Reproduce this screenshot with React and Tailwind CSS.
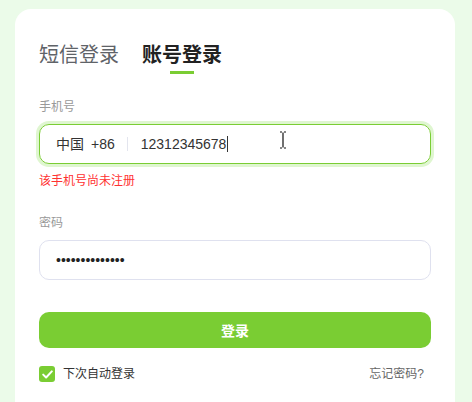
import { useState } from "react";

export default function App() {
  const [tab, setTab] = useState("account");
  const [remember, setRemember] = useState(true);

  return (
    <div className="min-h-screen w-full bg-[#ebfbe9] pt-[9px] pl-[15px] font-['Liberation_Sans','Noto_Sans_CJK_SC',sans-serif]">
      <div className="w-[440px] bg-white rounded-t-[16px] px-[24px] pt-[31px] pb-[20px]">
        {/* Tabs */}
        <div className="flex items-start gap-[23px]">
          <button
            onClick={() => setTab("sms")}
            className="flex flex-col items-center"
          >
            <span className="text-[20px] leading-[28px] text-[#5f6368] font-['Noto_Sans_CJK_SC',sans-serif]">
              短信登录
            </span>
          </button>
          <button
            onClick={() => setTab("account")}
            className="flex flex-col items-center"
          >
            <span className="text-[20px] leading-[28px] font-bold text-[#222] font-['Noto_Sans_CJK_SC',sans-serif]">
              账号登录
            </span>
            <span className="mt-[3px] w-[24px] h-[3px] bg-[#7acd33]" />
          </button>
        </div>

        {/* Phone */}
        <div className="mt-[25px] text-[12px] leading-[16px] text-[#999]">手机号</div>
        <div className="relative mt-[9px] h-[40px] rounded-[10px] border border-[#7acd33] shadow-[0_0_0_3px_#dff6d0] flex items-center pl-[16px]">
          <span className="text-[14px] text-[#333]">中国</span>
          <span className="ml-[7px] text-[14px] text-[#333]">+86</span>
          <span className="ml-[12px] w-px h-[14px] bg-[#e3e5ee]" />
          <span className="ml-[13px] text-[14px] text-[#333]">12312345678</span>
          <span className="ml-[1px] w-px h-[16px] bg-[#333]" />
          {/* mouse cursor */}
          <svg
            className="absolute left-[239px] top-[6px]"
            width="8"
            height="18"
            viewBox="0 0 8 18"
          >
            <path
              d="M1 1h2M5 1h2M4 1.5v15M1 17h2M5 17h2"
              stroke="#111"
              strokeWidth="1.2"
              fill="none"
            />
          </svg>
        </div>
        <div className="mt-[9px] text-[12px] leading-[16px] text-[#ff3131]">
          该手机号尚未注册
        </div>

        {/* Password */}
        <div className="mt-[26px] text-[12px] leading-[16px] text-[#999]">密码</div>
        <div className="mt-[9px] h-[40px] rounded-[10px] border border-[#dfe1ef] flex items-center pl-[16px]">
          <span className="text-[14px] text-[#222] font-['Liberation_Sans',sans-serif]">
            ••••••••••••••
          </span>
        </div>

        {/* Submit */}
        <button className="mt-[32px] w-full h-[36px] rounded-[10px] bg-[#7acd33] text-white text-[14px] font-bold font-['Noto_Sans_CJK_SC',sans-serif]">
          登录
        </button>

        {/* Footer row */}
        <div className="mt-[17px] flex items-center justify-between">
          <label className="flex items-center gap-[8px] cursor-pointer">
            <span
              onClick={() => setRemember(!remember)}
              className="w-[16px] h-[16px] rounded-[3px] bg-[#7acd33] flex items-center justify-center"
            >
              {remember && (
                <svg width="11" height="9" viewBox="0 0 11 9">
                  <path
                    d="M1.2 4.6l2.9 2.9L9.8 1.4"
                    stroke="#fff"
                    strokeWidth="2"
                    fill="none"
                    strokeLinecap="round"
                    strokeLinejoin="round"
                  />
                </svg>
              )}
            </span>
            <span className="text-[12px] text-[#333]">下次自动登录</span>
          </label>
          <span className="pr-[7px] text-[12px] text-[#666]">忘记密码?</span>
        </div>
      </div>
    </div>
  );
}
